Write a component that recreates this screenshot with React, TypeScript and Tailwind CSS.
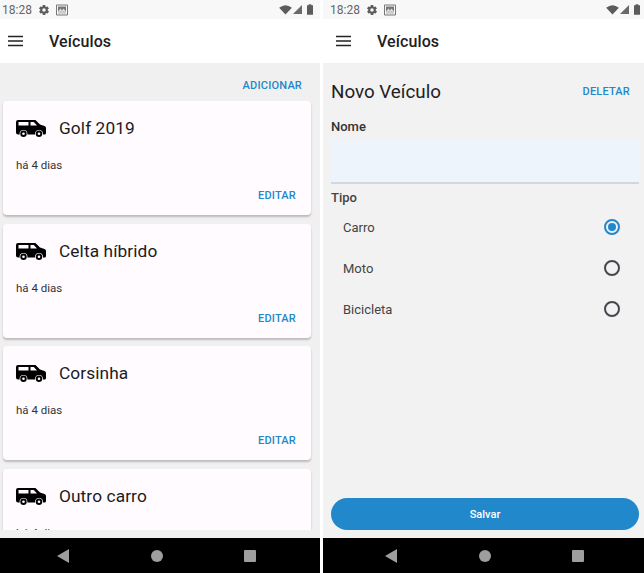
import type { ReactNode } from 'react';

const vehicles = ['Golf 2019', 'Celta híbrido', 'Corsinha', 'Outro carro'];
const tipos = ['Carro', 'Moto', 'Bicicleta'];

function StatusBar({ padding }: { padding: string }) {
  return (
    <div className={`h-[19px] shrink-0 bg-[#f8f8f8] flex items-center justify-between text-[#666] ${padding}`}>
      <div className="flex items-center">
        <span className="text-[12px] leading-none w-[36px]">18:28</span>
        <svg viewBox="0 0 24 24" className="w-[12px] h-[12px] mr-[6px] fill-[#5c5c5c]">
          <path d="M19.4 13c.1-.3.1-.7.1-1s0-.7-.1-1l2.1-1.6c.2-.2.2-.4.1-.6l-2-3.5c-.1-.2-.4-.3-.6-.2l-2.5 1c-.5-.4-1.100-.7-1.700-1l-.4-2.700c0-.2-.2-.4-.5-.4h-4c-.3 0-.5.2-.5.4l-.4 2.700c-.6.3-1.200.6-1.700 1l-2.500-1c-.2-.1-.5 0-.6.2l-2 3.500c-.1.2-.1.5.1.6L4.600 11c-.1.3-.1.700-.1 1s0 .7.1 1l-2.100 1.600c-.2.200-.2.400-.1.600l2 3.500c.1.200.4.300.6.200l2.500-1c.5.400 1.100.700 1.700 1l.4 2.700c0 .2.200.400.5.400h4c.300 0 .500-.200.500-.400l.400-2.700c.600-.300 1.200-.600 1.700-1l2.500 1c.200.100.500 0 .600-.200l2-3.500c.100-.200.100-.400-.100-.600L19.400 13zM12 15.500a3.500 3.500 0 1 1 0-7 3.500 3.500 0 0 1 0 7z" />
        </svg>
        <svg viewBox="0 0 12 12" className="w-[12px] h-[12px]">
          <path d="M0.500 1h11v10h-11z" fill="none" stroke="#777" strokeWidth="1" />
          <path d="M2 2.500h8v5H2z" fill="#777" />
          <path d="M2 7.500l2.500-3 1.500 2 1.500-2 2.500 3z" fill="#ddd" />
          <path d="M2 9h8" stroke="#aaa" strokeWidth="1" />
        </svg>
      </div>
      <div className="flex items-center gap-[1px]">
        <svg viewBox="0 0 14 11" className="w-[13px] h-[10px] fill-[#5c5c5c]">
          <path d="M0 3 Q7 -2.500 14 3 L7 10.500z" />
        </svg>
        <svg viewBox="0 0 10 10" className="w-[9px] h-[9px] fill-[#6a6a6a] mr-[4px]">
          <path d="M10 0v10H0z" />
        </svg>
        <svg viewBox="0 0 7 12" className="w-[6px] h-[11px] fill-[#5c5c5c]">
          <path d="M2 0h3v1h2v11H0V1h2z" />
        </svg>
      </div>
    </div>
  );
}

function AppBar({ padLeft }: { padLeft: string }) {
  return (
    <div className={`h-[44px] shrink-0 bg-white flex items-center pt-[2px] ${padLeft}`}>
      <svg viewBox="0 0 16 12" className="w-[15px] h-[12px] fill-[#222] mr-[26px] -mt-[2px]">
        <path d="M0 0.500h16v1.600H0zM0 5.200h16v1.600H0zM0 9.900h16v1.600H0z" />
      </svg>
      <span className="text-[16px] font-medium text-[#212121] tracking-[0.1px]">Veículos</span>
    </div>
  );
}

function NavBar({ backMargin }: { backMargin: string }) {
  return (
    <div className="h-[35px] shrink-0 bg-black flex items-center">
      <svg viewBox="0 0 12 14" className={`w-[12px] h-[14px] fill-[#9e9e9e] ${backMargin}`}>
        <path d="M12 0v14L0 7z" />
      </svg>
      <div className="w-[12px] h-[12px] rounded-full bg-[#9e9e9e] ml-[82px]" />
      <div className="w-[12px] h-[12px] rounded-[1px] bg-[#9e9e9e] ml-[81px]" />
    </div>
  );
}

function Phone({ children, className }: { children: ReactNode; className: string }) {
  return <div className={`h-[573px] flex flex-col overflow-hidden ${className}`}>{children}</div>;
}

// jeep silhouette, the same one on every card
function CarIcon() {
  return (
    <svg viewBox="0 0 30 18" className="w-[30px] h-[18px] shrink-0">
      <path
        fillRule="evenodd"
        fill="#000"
        d="M2 0H19.500L24 4.500 28.500 6Q30 6.500 30 8V13Q30 14.500 28.500 14.500H2Q0 14.500 0 12.500V2Q0 0 2 0ZM2.500 2V5.500H12.500V2ZM14.500 2V5.500H21L17.800 2Z"
      />
      <circle cx="7.500" cy="13.800" r="3.900" fill="#fff" />
      <circle cx="7.500" cy="13.800" r="3.200" fill="#000" />
      <circle cx="7.500" cy="13.800" r="1.300" fill="#fff" />
      <circle cx="23" cy="13.800" r="3.900" fill="#fff" />
      <circle cx="23" cy="13.800" r="3.200" fill="#000" />
      <circle cx="23" cy="13.800" r="1.300" fill="#fff" />
    </svg>
  );
}

function VehicleCard({ name }: { name: string }) {
  return (
    <div className="h-[114px] shrink-0 mb-[8.500px] rounded-[4px] bg-[#fffbfe] shadow-[0_2px_2px_rgba(0,0,0,0.22)] pt-[12px] px-[13px] flex flex-col">
      <div className="flex items-center h-[32px]">
        <CarIcon />
        <span className="ml-[13px] text-[17.300px] text-[#1c1b1f] tracking-[0.1px]">{name}</span>
      </div>
      <span className="mt-[12px] text-[11.500px] leading-[16px] text-[#333]">há 4 dias</span>
      <span className="mt-[15px] self-end mr-[2px] text-[11px] leading-[16px] font-medium text-[#2288cc] tracking-[0.2px]">EDITAR</span>
    </div>
  );
}

export default function App() {
  return (
    <div className="w-[644px] h-[573px] bg-white flex justify-between overflow-hidden font-['Roboto',sans-serif]">
      {/* Lista */}
      <Phone className="w-[320px]">
        <StatusBar padding="pl-[2px] pr-[7px]" />
        <AppBar padLeft="pl-[8px]" />
        <div className="flex-1 min-h-0 bg-[#f0f0f0] pb-[8px] flex flex-col">
          <div className="h-[38px] shrink-0 flex items-end justify-end pr-[18px] pb-[7px]">
            <span className="text-[11px] leading-[16px] font-medium text-[#2288cc] tracking-[0.2px]">ADICIONAR</span>
          </div>
          <div className="flex-1 min-h-0 overflow-hidden pl-[3px] pr-[9px]">
            {vehicles.map((v) => (
              <VehicleCard key={v} name={v} />
            ))}
          </div>
        </div>
        <NavBar backMargin="ml-[57px]" />
      </Phone>

      {/* Formulario */}
      <Phone className="w-[321px]">
        <StatusBar padding="pl-[7px] pr-[4px]" />
        <AppBar padLeft="pl-[13px]" />
        <div className="flex-1 min-h-0 bg-[#f2f2f2] flex flex-col pl-[8px] pr-[5px]">
          <div className="h-[56px] shrink-0 flex items-center justify-between pt-[2px] pr-[9px]">
            <span className="text-[18.800px] text-[#212121]">Novo Veículo</span>
            <span className="text-[11px] font-medium text-[#2288cc] tracking-[0.2px]">DELETAR</span>
          </div>
          <span className="text-[13px] leading-[16px] font-medium text-[#333]">Nome</span>
          <div className="h-[44px] mt-[5px] shrink-0 bg-[#edf4fb] border-b-2 border-[#cfd8e3]" />
          <span className="mt-[5px] text-[13px] leading-[17px] font-medium text-[#444]">Tipo</span>
          <div className="flex flex-col">
            {tipos.map((t, i) => (
              <div key={t} className="h-[41px] flex items-center justify-between pl-[12px] pr-[19px]">
                <span className="text-[13px] text-[#444] mt-[2px]">{t}</span>
                {i === 0 ? (
                  <div className="w-[16px] h-[16px] rounded-full border-2 border-[#2288cc] flex items-center justify-center">
                    <div className="w-[8px] h-[8px] rounded-full bg-[#2288cc]" />
                  </div>
                ) : (
                  <div className="w-[16px] h-[16px] rounded-full border-2 border-[#49454f]" />
                )}
              </div>
            ))}
          </div>
          <div className="mt-auto mb-[8px] h-[32px] rounded-full bg-[#2288cc] flex items-center justify-center pt-[2px]">
            <span className="text-[11px] font-medium text-white">Salvar</span>
          </div>
        </div>
        <NavBar backMargin="ml-[62px]" />
      </Phone>
    </div>
  );
}
